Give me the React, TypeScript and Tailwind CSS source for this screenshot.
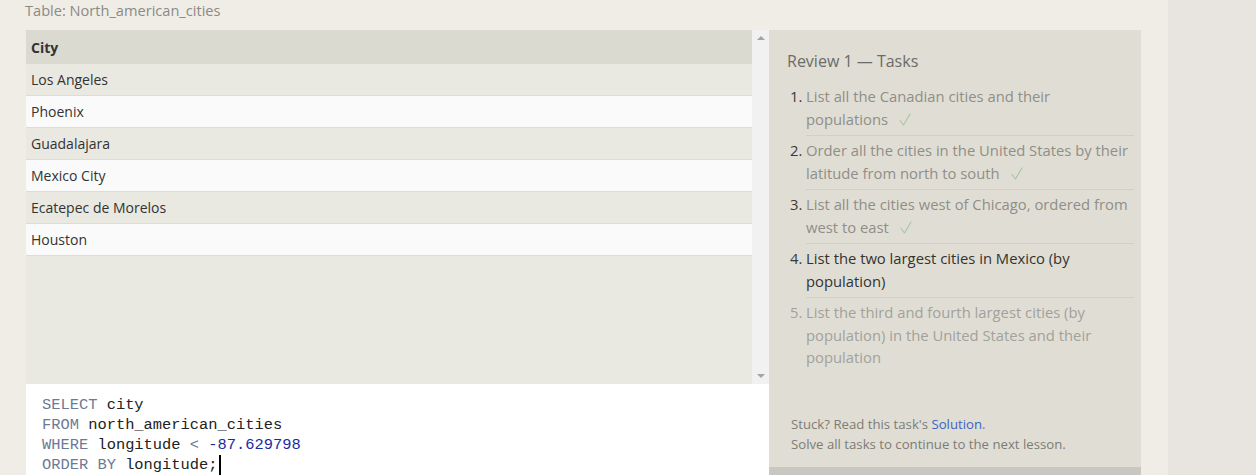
const cities = ['Los Angeles', 'Phoenix', 'Guadalajara', 'Mexico City', 'Ecatepec de Morelos', 'Houston'];

const tasks = [
  { text: 'List all the Canadian cities and their populations', state: 'done' },
  { text: 'Order all the cities in the United States by their latitude from north to south', state: 'done' },
  { text: 'List all the cities west of Chicago, ordered from west to east', state: 'done' },
  { text: 'List the two largest cities in Mexico (by population)', state: 'active' },
  { text: 'List the third and fourth largest cities (by population) in the United States and their population', state: 'todo' },
];

const Check = () => (
  <svg className="ml-[11px] inline-block align-[-1px]" width="12" height="13" viewBox="0 0 12 13" fill="none">
    <path d="M1 7.5 L4.5 12 L11 1" stroke="#a9c7a3" strokeWidth="1.2" strokeLinecap="round" strokeLinejoin="round" />
  </svg>
);

const App = () => {
  return (
    <div className="flex h-[475px] w-full overflow-hidden bg-[#f0ede6] font-['Open_Sans',sans-serif]">
      <div className="w-[1168px] shrink-0 pl-[26px]">
        <div className="-ml-px h-[30px] pt-px text-[14.6px] leading-[18px] text-[#8a8a86]">Table: North_american_cities</div>

        <div className="flex">
          <div className="w-[743px] shrink-0">
            <div className="flex h-[354px]">
              <div className="flex-1 bg-[#e9e8e1]">
                <div className="flex h-[34px] items-center bg-[#dadad0] pl-[5px] text-[14px] font-bold text-[#333]">City</div>
                {cities.map((c, i) => (
                  <div
                    key={c}
                    className={`flex h-[32px] items-center border-b border-[#dedcd5] pl-[5px] text-[14px] text-[#333] ${
                      i % 2 === 0 ? 'bg-[#e9e8e1]' : 'bg-[#fafafa]'
                    }`}
                  >
                    {c}
                  </div>
                ))}
              </div>
              <div className="flex w-[17px] flex-col items-center justify-between bg-[#f1f1f1] py-[6px]">
                <span className="h-0 w-0 border-x-[4px] border-b-[4px] border-x-transparent border-b-[#a3a3a3]" />
                <span className="h-0 w-0 border-x-[4px] border-t-[4px] border-x-transparent border-t-[#a3a3a3]" />
              </div>
            </div>

            <div className="h-[100px] bg-white pl-[16px] pt-[11px] font-['Liberation_Mono',monospace] text-[15.4px] leading-[20px] text-[#222]">
              <div><span className="text-[#6c7a96]">SELECT</span> city</div>
              <div><span className="text-[#6c7a96]">FROM</span> north_american_cities</div>
              <div>
                <span className="text-[#6c7a96]">WHERE</span> longitude <span className="text-[#6c7a96]">&lt;</span>{' '}
                <span className="text-[#1c2aa6]">-87.629798</span>
              </div>
              <div className="flex items-center">
                <span className="text-[#6c7a96]">ORDER BY</span>&nbsp;longitude;
                <span className="ml-px inline-block h-[20px] w-[2px] bg-black" />
              </div>
            </div>
          </div>

          <div className="flex h-[445px] w-[372px] shrink-0 flex-col bg-[#e0ded4]">
            <div className="flex-1 pl-[18px] pr-[7px] pt-[20px]">
              <h2 className="mb-[10px] text-[16px] leading-[22px] text-[#6b6b68]">Review 1 — Tasks</h2>
              <ol>
                {tasks.map((t, i) => (
                  <li key={i} className="flex text-[14.8px] leading-[22.5px]">
                    <span className={`w-[19px] shrink-0 pl-[3px] pt-[3px] ${t.state === 'todo' ? 'text-[#a2a19b]' : 'text-[#3a3a38]'}`}>
                      {i + 1}.
                    </span>
                    <div
                      className={`flex-1 pb-[5px] pt-[3px] ${i < tasks.length - 1 ? 'border-b border-[#d2d0c6]' : ''} ${
                        t.state === 'done' ? 'text-[#8f8e88]' : t.state === 'active' ? 'text-[#333331]' : 'text-[#a2a19b]'
                      }`}
                    >
                      {t.text}
                      {t.state === 'done' && <Check />}
                    </div>
                  </li>
                ))}
              </ol>
            </div>
            <div className="pb-[13px] pl-[22px] text-[13.2px] leading-[20px] text-[#7d7c77]">
              <div>
                Stuck? Read this task's <span className="text-[#3c63c4]">Solution</span>.
              </div>
              <div>Solve all tasks to continue to the next lesson.</div>
            </div>
            <div className="h-[8px] bg-[#c9c7c1]" />
          </div>
        </div>
      </div>
      <div className="flex-1 bg-[#e8e5e1]" />
    </div>
  );
};

export default App;
